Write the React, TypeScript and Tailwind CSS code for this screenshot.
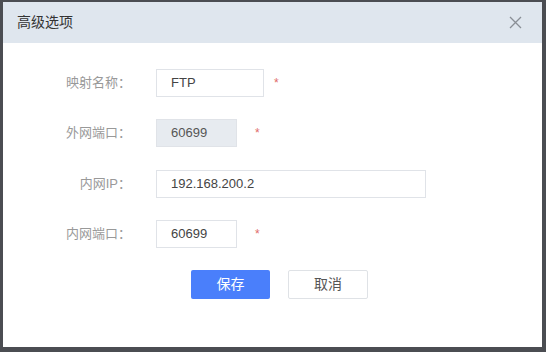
import React from 'react';

const FONT = "font-['Liberation_Sans','Noto_Sans_CJK_SC',sans-serif]";

type Row = {
  label: string;
  value: string;
  width: string;
  disabled?: boolean;
  star?: string;
  extra?: string;
};

const ROWS: Row[] = [
  { label: '映射名称：', value: 'FTP', width: 'w-[108px]', star: 'ml-[10px]' },
  { label: '外网端口：', value: '60699', width: 'w-[81px]', disabled: true, star: 'ml-[18px]' },
  { label: '内网IP：', value: '192.168.200.2', width: 'w-[270px]', extra: 'mt-[1px]' },
  { label: '内网端口：', value: '60699', width: 'w-[81px]', star: 'ml-[18px]' },
];

const App: React.FC = () => {
  return (
    <div className={`w-[546px] h-[352px] bg-[#4b4d52] pt-[2px] pl-[3px] ${FONT}`}>
      <div className="w-[539px] h-[345px] bg-white flex flex-col">
        {/* Header */}
        <div className="h-[41px] bg-[#dfe6ee] flex items-center justify-between pl-[14px] pr-[20px]">
          <span className="text-[14px] text-[#333]">高级选项</span>
          <svg width="13" height="13" viewBox="0 0 13 13" className="text-[#8a8f96]">
            <path d="M1 1L12 12M12 1L1 12" stroke="currentColor" strokeWidth="1.3" fill="none" />
          </svg>
        </div>

        {/* Form */}
        <div className="flex flex-col gap-[22px] pt-[26px]">
          {ROWS.map((r) => (
            <div key={r.label} className={`flex items-center h-[28px] ${r.extra ?? ''}`}>
              <label className="w-[128px] text-right text-[13px] text-[#999]">{r.label}</label>
              <div
                className={`ml-[25px] h-[28px] ${r.width} border border-[#e0e3e8] flex items-center px-[14px] text-[13px] ${
                  r.disabled ? 'bg-[#e7ebf0] text-[#555]' : 'bg-white text-[#444]'
                }`}
              >
                {r.value}
              </div>
              {r.star && <span className={`${r.star} text-[12px] text-[#e06a6a]`}>*</span>}
            </div>
          ))}
        </div>

        {/* Actions */}
        <div className="flex gap-[18px] pl-[188px] mt-[22px]">
          <button className="w-[79px] h-[29px] bg-[#4a7ffb] text-white text-[14px] rounded-[2px]">保存</button>
          <button className="w-[80px] h-[29px] bg-white border border-[#dfe2e6] text-[#555] text-[14px] rounded-[2px]">
            取消
          </button>
        </div>
      </div>
    </div>
  );
};

export default App;
